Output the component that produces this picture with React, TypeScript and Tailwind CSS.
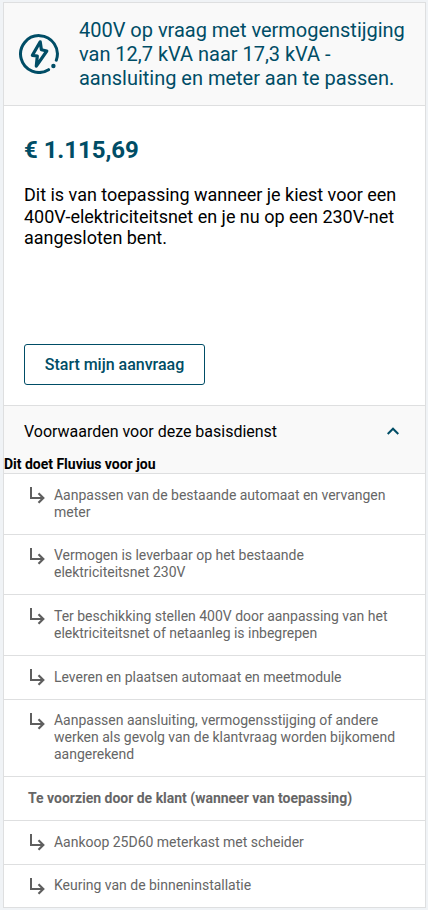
import React from "react";

function EnergyIcon() {
  return (
    <svg className="block h-10 w-10 shrink-0" viewBox="0 0 40 40" fill="none" stroke="#004d66" strokeLinecap="round" strokeLinejoin="round">
      <path d="M29.6 35.7 A18.4 18.4 0 1 1 37.3 26.2" strokeWidth="3" />
      <path d="M21.2 7.8 L13.4 21.3 L18.3 22 L17.3 32.1 L27.8 17 L22.4 15.8 Z" strokeWidth="3.2" />
      <circle cx="34.4" cy="32" r="2.2" fill="#004d66" stroke="none" />
    </svg>
  );
}

function RowArrow() {
  return (
    <svg className="mt-[0.35px] -mb-1 block h-[18px] w-4 shrink-0" viewBox="0 0 16 18" fill="none" stroke="#5f5f5f" strokeWidth="2">
      <path d="M1 0 V11 H13.3" />
      <path d="M8.5 6.2 L13.3 11 L8.5 15.8" strokeWidth="2.2" />
    </svg>
  );
}

function ConditionRow({ text }: { text: string }) {
  return (
    <li className="flex gap-2 border-t border-[#dedfe0] pt-[12.65px] pr-6 pb-[13.35px] pl-[26px] text-sm leading-[16.8px] text-[#666]">
      <RowArrow />
      <span>{text}</span>
    </li>
  );
}

const fluviusItems = [
  "Aanpassen van de bestaande automaat en vervangen meter",
  "Vermogen is leverbaar op het bestaande elektriciteitsnet 230V",
  "Ter beschikking stellen 400V door aanpassing van het elektriciteitsnet of netaanleg is inbegrepen",
  "Leveren en plaatsen automaat en meetmodule",
  "Aanpassen aansluiting, vermogensstijging of andere werken als gevolg van de klantvraag worden bijkomend aangerekend",
];

const customerItems = ["Aankoop 25D60 meterkast met scheider", "Keuring van de binneninstallatie"];

export default function App() {
  return (
    <div className="h-[910px] w-[428px] overflow-hidden bg-[#f0f3f6] pt-0.5 pl-[3px] font-[Roboto,sans-serif] tracking-[-0.015px] text-black">
      <article className="h-[906px] w-[423px] border border-[#dedfe0] bg-white">
        <header className="flex h-[103px] items-center gap-5 border-b border-[#dedfe0] bg-[#f9f9f9] pl-[15px]">
          <EnergyIcon />
          <h2 className="w-[335px] text-xl leading-6 text-[#004d66]">
            400V op vraag met vermogenstijging van 12,7 kVA naar 17,3 kVA - aansluiting en meter aan te passen.
          </h2>
        </header>
        <section className="flex h-[299px] flex-col items-start px-5 pt-[30px] pb-5">
          <p className="text-2xl leading-7 font-bold tracking-[-0.05px] text-[#004d66]">€ 1.115,69</p>
          <p className="mt-5 text-lg leading-[21.6px]">
            Dit is van toepassing wanneer je kiest voor een 400V-elektriciteitsnet en je nu op een 230V-net aangesloten bent.
          </p>
          <button className="mt-auto h-[41px] w-[181px] rounded-[3px] border border-[#004d66] bg-white text-base font-medium text-[#004d66]">
            Start mijn aanvraag
          </button>
        </section>
        <section>
          <div className="h-[68.2px] border-t border-[#dedfe0] bg-[#f9f9f9]">
            <div className="flex h-[50px] items-center justify-between pr-[26px] pl-5">
              <h3 className="pt-0.5 text-base">Voorwaarden voor deze basisdienst</h3>
              <svg className="block h-2 w-3" viewBox="0 0 12 8" fill="none" stroke="#004d66" strokeWidth="2">
                <path d="M0.7 7 L6 1.7 L11.3 7" />
              </svg>
            </div>
            <h4 className="text-sm leading-[17px] font-bold">Dit doet Fluvius voor jou</h4>
          </div>
          <ul>
            {fluviusItems.map((text) => (
              <ConditionRow key={text} text={text} />
            ))}
            <li className="border-t border-[#dedfe0] pt-[12.65px] pb-[13.35px] pl-6 text-sm leading-[16.8px] font-bold text-[#666]">
              Te voorzien door de klant (wanneer van toepassing)
            </li>
            {customerItems.map((text) => (
              <ConditionRow key={text} text={text} />
            ))}
          </ul>
        </section>
      </article>
    </div>
  );
}
